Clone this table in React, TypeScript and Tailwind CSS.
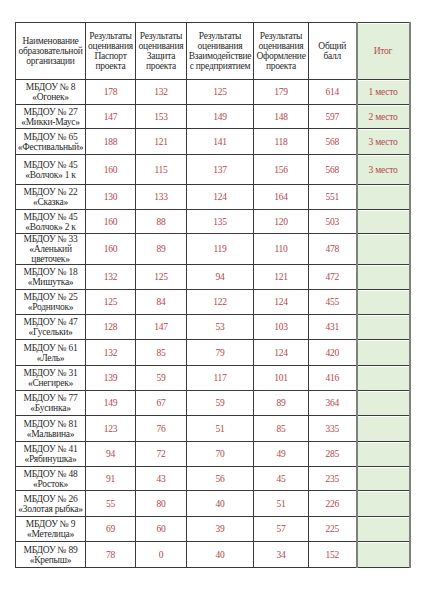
import React from 'react';

type Row = {
  name: string[];
  passport: number;
  defense: number;
  interaction: number;
  design: number;
  total: number;
  place?: string;
  h: number;
};

const rows: Row[] = [
  { name: ['МБДОУ № 8', '«Огонек»'], passport: 178, defense: 132, interaction: 125, design: 179, total: 614, place: '1 место', h: 25 },
  { name: ['МБДОУ № 27', '«Микки-Маус»'], passport: 147, defense: 153, interaction: 149, design: 148, total: 597, place: '2 место', h: 24 },
  { name: ['МБДОУ № 65', '«Фестивальный»'], passport: 188, defense: 121, interaction: 141, design: 118, total: 568, place: '3 место', h: 26 },
  { name: ['МБДОУ № 45', '«Волчок» 1 к'], passport: 160, defense: 115, interaction: 137, design: 156, total: 568, place: '3 место', h: 30 },
  { name: ['МБДОУ № 22', '«Сказка»'], passport: 130, defense: 133, interaction: 124, design: 164, total: 551, h: 25 },
  { name: ['МБДОУ № 45', '«Волчок» 2 к'], passport: 160, defense: 88, interaction: 135, design: 120, total: 503, h: 24 },
  { name: ['МБДОУ № 33', '«Аленький', 'цветочек»'], passport: 160, defense: 89, interaction: 119, design: 110, total: 478, h: 30 },
  { name: ['МБДОУ № 18', '«Мишутка»'], passport: 132, defense: 125, interaction: 94, design: 121, total: 472, h: 25 },
  { name: ['МБДОУ № 25', '«Родничок»'], passport: 125, defense: 84, interaction: 122, design: 124, total: 455, h: 25 },
  { name: ['МБДОУ № 47', '«Гусельки»'], passport: 128, defense: 147, interaction: 53, design: 103, total: 431, h: 25 },
  { name: ['МБДОУ № 61', '«Лель»'], passport: 132, defense: 85, interaction: 79, design: 124, total: 420, h: 26 },
  { name: ['МБДОУ № 31', '«Снегирек»'], passport: 139, defense: 59, interaction: 117, design: 101, total: 416, h: 25 },
  { name: ['МБДОУ № 77', '«Бусинка»'], passport: 149, defense: 67, interaction: 59, design: 89, total: 364, h: 25 },
  { name: ['МБДОУ № 81', '«Мальвина»'], passport: 123, defense: 76, interaction: 51, design: 85, total: 335, h: 26 },
  { name: ['МБДОУ № 41', '«Рябинушка»'], passport: 94, defense: 72, interaction: 70, design: 49, total: 285, h: 25 },
  { name: ['МБДОУ № 48', '«Росток»'], passport: 91, defense: 43, interaction: 56, design: 45, total: 235, h: 24 },
  { name: ['МБДОУ № 26', '«Золотая рыбка»'], passport: 55, defense: 80, interaction: 40, design: 51, total: 226, h: 26 },
  { name: ['МБДОУ № 9', '«Метелица»'], passport: 69, defense: 60, interaction: 39, design: 57, total: 225, h: 25 },
  { name: ['МБДОУ № 89', '«Крепыш»'], passport: 78, defense: 0, interaction: 40, design: 34, total: 152, h: 26 },
];

const cell = 'border border-[#3a3a3a] text-center align-middle p-0 whitespace-nowrap';
const num = `${cell} text-[#b5474b]`;
const green =
  'border-y border-y-[#3a3a3a] border-x-2 border-x-[#808080] bg-[#e2efda] shadow-[inset_0_1px_0_#ffffff] text-center align-middle p-0 whitespace-nowrap text-[#b5474b]';

function Lines({ lines }: { lines: string[] }) {
  return (
    <>
      {lines.map((l, i) => (
        <div key={i}>{l}</div>
      ))}
    </>
  );
}

export default function App() {
  return (
    <div className="w-[424px] h-[600px] bg-white pt-[22px] pl-[15px]" style={{ fontFamily: '"Liberation Serif", "Times New Roman", serif' }}>
      <table className="border-collapse table-fixed text-[9.5px] leading-[10px] tracking-[-0.25px] text-[#2a2a2a] w-[394px]">
        <colgroup>
          <col className="w-[70px]" />
          <col className="w-[50px]" />
          <col className="w-[51px]" />
          <col className="w-[67px]" />
          <col className="w-[55px]" />
          <col className="w-[48px]" />
          <col className="w-[53px]" />
        </colgroup>
        <thead>
          <tr className="h-[57px]">
            <th className={`${cell} font-normal`}>
              <Lines lines={['Наименование', 'образовательной', 'организации']} />
            </th>
            <th className={`${cell} font-normal`}>
              <Lines lines={['Результаты', 'оценивания', 'Паспорт', 'проекта']} />
            </th>
            <th className={`${cell} font-normal`}>
              <Lines lines={['Результаты', 'оценивания', 'Защита', 'проекта']} />
            </th>
            <th className={`${cell} font-normal`}>
              <Lines lines={['Результаты', 'оценивания', 'Взаимодействие', 'с предприятием']} />
            </th>
            <th className={`${cell} font-normal`}>
              <Lines lines={['Результаты', 'оценивания', 'Оформление', 'проекта']} />
            </th>
            <th className={`${cell} font-normal`}>
              <Lines lines={['Общий', 'балл']} />
            </th>
            <th className={`${green} font-normal`}>Итог</th>
          </tr>
        </thead>
        <tbody>
          {rows.map((r, i) => (
            <tr key={i} style={{ height: r.h }}>
              <td className={cell}>
                <Lines lines={r.name} />
              </td>
              <td className={num}>{r.passport}</td>
              <td className={num}>{r.defense}</td>
              <td className={num}>{r.interaction}</td>
              <td className={num}>{r.design}</td>
              <td className={num}>{r.total}</td>
              <td className={green}>{r.place ?? ''}</td>
            </tr>
          ))}
        </tbody>
      </table>
    </div>
  );
}
